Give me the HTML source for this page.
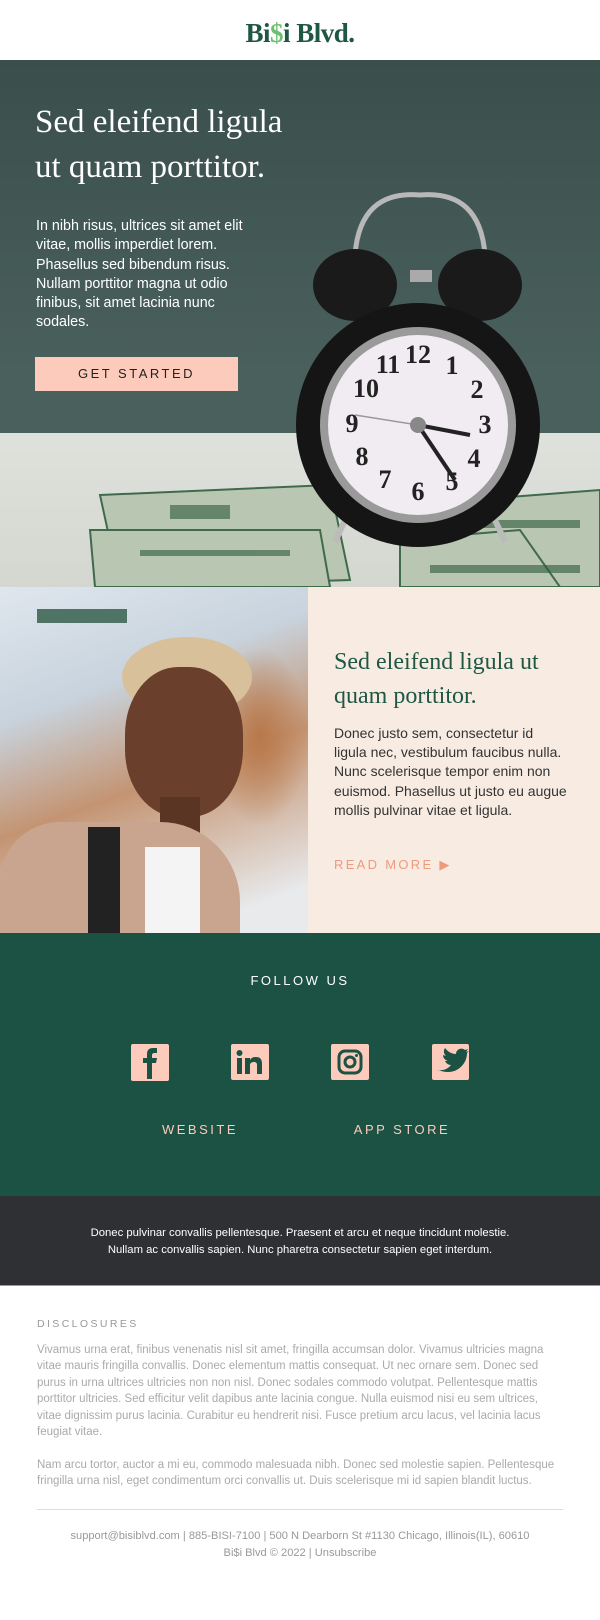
<!DOCTYPE html>
<html><head><meta charset="utf-8"><style>
*{margin:0;padding:0;box-sizing:border-box}
body{width:600px;height:1620px;background:#fff;font-family:"Liberation Sans",sans-serif;position:relative;overflow:hidden}
.a{position:absolute}
.serif{font-family:"Liberation Serif",serif}
</style></head><body>
<div class="a serif" style="left:0;width:600px;top:18px;text-align:center;font-size:27px;font-weight:bold;color:#1f5745;letter-spacing:-0.5px">Bi<span style="color:#6fbf73">$</span>i Blvd.</div>

<div class="a" style="left:0;top:60px;width:600px;height:527px;background:linear-gradient(#3a4f4c,#4a605c 60%);overflow:hidden">
  <div class="a" style="left:0;top:373px;width:600px;height:154px;background:linear-gradient(#dfe2dc,#d3d7d0)"></div>
  <svg class="a" style="left:0;top:0" width="600" height="527">
    <g fill="#b9c6b2" stroke="#3f6a4c" stroke-width="2">
      <polygon points="100,435 330,425 350,520 120,527"/>
      <polygon points="90,470 320,470 330,527 95,527"/>
      <polygon points="470,440 600,430 600,527 460,527"/>
      <polygon points="400,480 520,470 560,527 400,527"/>
    </g>
    <g fill="#2f5a3c" opacity=".6">
      <rect x="170" y="445" width="60" height="14"/><rect x="140" y="490" width="150" height="6"/>
      <rect x="480" y="460" width="100" height="8"/><rect x="430" y="505" width="150" height="8"/>
    </g>
    <path d="M355,195 Q360,130 420,135 Q480,130 485,195" fill="none" stroke="#b8b8b8" stroke-width="5"/>
    <ellipse cx="355" cy="225" rx="42" ry="36" fill="#1a1a1a"/>
    <ellipse cx="480" cy="225" rx="42" ry="36" fill="#1a1a1a"/>
    <rect x="410" y="210" width="22" height="12" fill="#aaa"/>
    <line x1="345" y1="460" x2="335" y2="482" stroke="#bbb" stroke-width="6"/>
    <line x1="495" y1="460" x2="505" y2="482" stroke="#bbb" stroke-width="6"/>
    <circle cx="418" cy="365" r="122" fill="#151515"/>
    <circle cx="418" cy="365" r="98" fill="#9a9a9a"/>
    <circle cx="418" cy="365" r="90" fill="#f1ecf2"/>
    <g font-family="Liberation Serif,serif" font-weight="bold" font-size="26" fill="#222" text-anchor="middle">
      <text x="418" y="303">12</text><text x="452" y="314">1</text><text x="477" y="338">2</text>
      <text x="485" y="373">3</text><text x="474" y="407">4</text><text x="452" y="430">5</text>
      <text x="418" y="440">6</text><text x="385" y="428">7</text><text x="362" y="405">8</text>
      <text x="352" y="372">9</text><text x="366" y="337">10</text><text x="388" y="313">11</text>
    </g>
    <line x1="418" y1="365" x2="470" y2="375" stroke="#222" stroke-width="4"/>
    <line x1="418" y1="365" x2="455" y2="420" stroke="#222" stroke-width="4"/>
    <line x1="418" y1="365" x2="355" y2="355" stroke="#999" stroke-width="1.5"/>
    <circle cx="418" cy="365" r="8" fill="#888"/>
  </svg>
  <div class="a serif" style="left:35px;top:40px;font-size:33px;line-height:45px;color:#fff">Sed eleifend ligula<br>ut quam porttitor.</div>
  <div class="a" style="left:36px;top:157px;font-size:14.3px;line-height:19.3px;color:#fff;width:218px">In nibh risus, ultrices sit amet elit vitae, mollis imperdiet lorem. Phasellus sed bibendum risus. Nullam porttitor magna ut odio finibus, sit amet lacinia nunc sodales.</div>
  <div class="a" style="left:35px;top:297px;width:203px;height:34px;background:#fdcbbb;color:#222;font-size:13px;letter-spacing:2.5px;text-align:center;line-height:34px">GET STARTED</div>
</div>

<div class="a" style="left:0;top:587px;width:308px;height:346px;overflow:hidden;background:linear-gradient(160deg,#dfe6ee 0%,#c8d3dd 30%,#c49472 55%,#e8eaec 90%)">
  <div class="a" style="left:37px;top:22px;width:90px;height:14px;background:#4f7466"></div>
  <div class="a" style="left:210px;top:60px;width:100px;height:180px;background:radial-gradient(#b8784a,transparent 70%)"></div>
  <div class="a" style="left:122px;top:50px;width:130px;height:80px;border-radius:50%;background:#d8c09a"></div>
  <div class="a" style="left:125px;top:80px;width:118px;height:150px;border-radius:45%;background:#6a3f2c"></div>
  <div class="a" style="left:160px;top:210px;width:40px;height:60px;background:#5a3524"></div>
  <div class="a" style="left:0;top:235px;width:240px;height:120px;border-radius:60px 80px 0 0;background:#c9a590"></div>
  <div class="a" style="left:145px;top:260px;width:55px;height:90px;background:#f4f4f4"></div>
  <div class="a" style="left:88px;top:240px;width:32px;height:110px;background:#222"></div>
</div>
<div class="a" style="left:308px;top:587px;width:292px;height:346px;background:#f8ece2">
  <div class="a serif" style="left:26px;top:58px;width:240px;font-size:24px;line-height:34px;color:#1f5745">Sed eleifend ligula ut quam porttitor.</div>
  <div class="a" style="left:26px;top:137px;width:234px;font-size:14px;line-height:19.2px;color:#333">Donec justo sem, consectetur id ligula nec, vestibulum faucibus nulla. Nunc scelerisque tempor enim non euismod. Phasellus ut justo eu augue mollis pulvinar vitae et ligula.</div>
  <div class="a" style="left:26px;top:270px;font-size:13px;letter-spacing:2.3px;color:#ee9a7e">READ MORE ▶</div>
</div>

<div class="a" style="left:0;top:933px;width:600px;height:263px;background:#1c5244">
  <div class="a" style="left:0;width:600px;top:40px;text-align:center;color:#fff;font-size:13px;letter-spacing:2.5px">FOLLOW US</div>
  <svg class="a" style="left:0;top:110px" width="600" height="40">
    <g fill="#fdcbbb"><rect x="131" y="1" width="38" height="37" rx="2"/><rect x="231" y="1" width="38" height="36" rx="2"/><rect x="331" y="1" width="38" height="36" rx="2"/><rect x="432" y="1" width="37" height="36" rx="2"/></g>
    <path d="M147,36V20h-4v-5h4v-4c0-4,2-6,6-6h4v5h-3c-1,0-2,1-2,2v3h5l-1,5h-4v16z" fill="#1c5244"/>
    <g fill="#1c5244"><rect x="237" y="15" width="5" height="16"/><circle cx="239.5" cy="10" r="3"/><path d="M245,15h5v2c1-2,3-3,6-3c4,0,6,2,6,7v10h-5v-9c0-2-1-3-3-3s-4,1-4,3v9h-5z"/></g>
    <rect x="339" y="8" width="22" height="22" rx="6" fill="none" stroke="#1c5244" stroke-width="3"/>
    <circle cx="350" cy="19" r="5" fill="none" stroke="#1c5244" stroke-width="3"/><circle cx="356.5" cy="12.5" r="1.5" fill="#1c5244"/>
    <path d="M437,27c6,1,11-1,14-5c-3,0-5-2-6-4h3c-3-1-5-3-5-6l3,1c-2-2-3-5-1-8c3,4,7,6,11,6c0-5,6-7,9-4l3-1-2,3 3-1-2 2c0,10-8,19-19,19c-4,0-7-1-10-2z" fill="#1c5244"/>
  </svg>
  <div class="a" style="left:100px;width:200px;top:189px;text-align:center;color:#fdcbbb;font-size:13px;letter-spacing:2.5px">WEBSITE</div>
  <div class="a" style="left:302px;width:200px;top:189px;text-align:center;color:#fdcbbb;font-size:13px;letter-spacing:2.5px">APP STORE</div>
</div>

<div class="a" style="left:0;top:1196px;width:600px;height:90px;background:#2e3033;border-bottom:1px solid #999">
  <div class="a" style="left:0;width:600px;top:29px;text-align:center;color:#fff;font-size:11.3px;line-height:17px">Donec pulvinar convallis pellentesque. Praesent et arcu et neque tincidunt molestie.<br>Nullam ac convallis sapien. Nunc pharetra consectetur sapien eget interdum.</div>
</div>

<div class="a" style="left:37px;top:1318px;font-size:10.5px;letter-spacing:2.4px;color:#999">DISCLOSURES</div>
<div class="a" style="left:37px;top:1342px;width:528px;font-size:11.5px;line-height:16.4px;color:#aaa">Vivamus urna erat, finibus venenatis nisl sit amet, fringilla accumsan dolor. Vivamus ultricies magna vitae mauris fringilla convallis. Donec elementum mattis consequat. Ut nec ornare sem. Donec sed purus in urna ultrices ultricies non non nisl. Donec sodales commodo volutpat. Pellentesque mattis porttitor ultricies. Sed efficitur velit dapibus ante lacinia congue. Nulla euismod nisi eu sem ultrices, vitae dignissim purus lacinia. Curabitur eu hendrerit nisi. Fusce pretium arcu lacus, vel lacinia lacus feugiat vitae.<br><br>Nam arcu tortor, auctor a mi eu, commodo malesuada nibh. Donec sed molestie sapien. Pellentesque fringilla urna nisl, eget condimentum orci convallis ut. Duis scelerisque mi id sapien blandit luctus.</div>
<div class="a" style="left:37px;top:1509px;width:526px;height:1px;background:#ddd"></div>
<div class="a" style="left:0;width:600px;top:1528px;text-align:center;font-size:11.1px;line-height:16.5px;color:#999">support@bisiblvd.com | 885-BISI-7100 | 500 N Dearborn St #1130 Chicago, Illinois(IL), 60610<br>Bi$i Blvd © 2022 | Unsubscribe</div>
</body></html>
